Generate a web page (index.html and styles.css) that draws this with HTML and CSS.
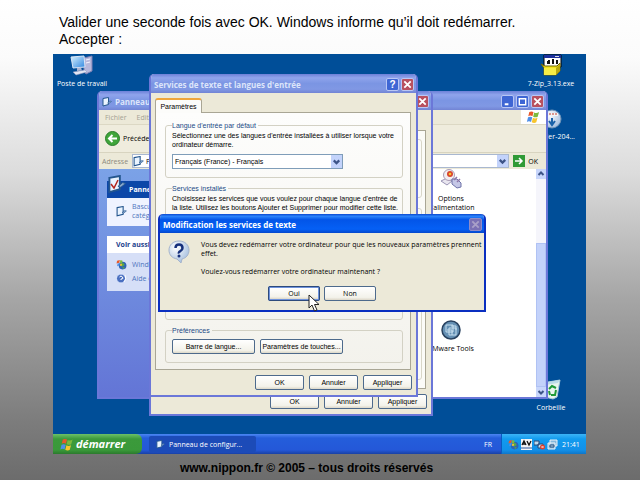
FILE: index.html
```html
<!DOCTYPE html>
<html lang="fr">
<head>
<meta charset="utf-8">
<title>Valider et redémarrer</title>
<link rel="stylesheet" href="styles.css">
</head>
<body>
<svg class="defs" aria-hidden="true">
  <defs>
    <linearGradient id="screenBlue" x1="0" y1="0" x2="1" y2="1"><stop offset="0" stop-color="#d8f2ff"/><stop offset="1" stop-color="#2f86e0"/></linearGradient>
    <radialGradient id="ball" cx=".35" cy=".3" r=".8"><stop offset="0" stop-color="#fff"/><stop offset="1" stop-color="#9db9dc"/></radialGradient>
    <symbol id="flag" viewBox="0 0 20 18">
      <path d="M4 2q3-2 6 0L8.500 8q-3-2-6 0z" fill="#e8592b"/>
      <path d="M11 2.500q3 2 7-.5L16 8.500q-3 2-6.500 0z" fill="#7cba3d"/>
      <path d="M2.200 9.500q3-2 6 0L6.500 16q-3-2-6 0z" fill="#4f8fe8"/>
      <path d="M9.200 10q3 2 6.500 0L14 16.500q-3 2-6.500 0z" fill="#f7c52d"/>
    </symbol>
    <symbol id="cross" viewBox="0 0 12 12"><path d="M2.500 2.500l7 7M9.500 2.500l-7 7" stroke="currentColor" stroke-width="2"/></symbol>
    <symbol id="down" viewBox="0 0 10 10"><path d="M2.500 4l2.500 2.500L7.500 4" fill="none" stroke="#3d5488" stroke-width="2"/></symbol>
    <symbol id="panel" viewBox="0 0 20 20">
      <path d="M2 3l11-2v14L2 18z" fill="#eaf4ff" stroke="#24568e" stroke-width="2"/>
      <path d="M11 12l5-4 3 1-5 4z" fill="#86a6cc" stroke="#24568e"/>
    </symbol>
    <symbol id="globe" viewBox="0 0 20 20">
      <circle cx="12" cy="12" r="7" fill="#2d63b5"/><path d="M8 9l5-2 3 4-5 3zM11 16l5-2-2 4z" fill="#5aa845"/>
      <path d="M2 3l5-1-1 5-5 1z" fill="#e8592b"/><path d="M8 2l4 1-1 5-4-1z" fill="#7cba3d"/><path d="M3 8l4-.5L6 12l-4 1z" fill="#4f8fe8"/><path d="M8 8l3 1-1 4-3-1z" fill="#f7c52d"/>
    </symbol>
  </defs>
</svg>

<main class="slide">
  <p class="lead">Valider une seconde fois avec OK. Windows informe qu’il doit redémarrer.<br>Accepter :</p>

  <div class="screen">
    <div class="desktop">
      <div class="shortcut computer">
        <svg width="24" height="21" viewBox="0 0 24 21"><path d="M14 3l8-2v15l-6 3-2-3z" fill="#b7b8dc" stroke="#7d80b4"/><path d="M16 5l4-1M16 8l4-1" stroke="#f4f4ff"/><path d="M1 2l13-1 1 11-12 1z" fill="url(#screenBlue)" stroke="#dbe6f7"/><path d="M7 13l4-.5 1 3-5 .5z" fill="#aeb6d4"/><path d="M3 17l12-2 2 2-11 3z" fill="#e4e6f3" stroke="#8f94bd" stroke-width=".5"/></svg>
        <span>Poste de travail</span>
      </div>
      <div class="shortcut zip">
        <svg width="22" height="22" viewBox="0 0 22 22"><path d="M4 1h17v12H4z" fill="#fff" stroke="#000"/><path d="M4 1h17v3H4z" fill="#1c2f9c"/><path d="M15 2h4v1h-4z" fill="#ddd"/><path d="M7 7h2v3H7zM12 6h2v4h-2zM16 7h2v3h-2z" fill="#111"/><path d="M1 10l4 2h12l3-3v8l-4 4H4V14z" fill="#f1e21d" stroke="#6d6506"/><path d="M8 6h2v4H8zM12 5h2v4h-2zM16 6h2v3h-2z" fill="#111"/><path d="M4 14h12v7H4z" fill="#f5ec45"/><path d="M16 14l4-4v7l-4 4z" fill="#b9a911"/></svg>
        <span>7-Zip_3.13.exe</span>
      </div>
      <div class="shortcut disc">
        <svg width="20" height="20" viewBox="0 0 20 20"><circle cx="10" cy="10" r="9" fill="url(#ball)" stroke="#6e93b7"/><path d="M3 4h13v3H3z" fill="#f4f4f4"/><path d="M4 5h11" stroke="#c0392b" stroke-dasharray="2 1"/><path d="M10 9v6M7 12l3 4 3-4" fill="none" stroke="#1b62a8" stroke-width="2"/></svg>
        <span>installer-204...</span>
      </div>
      <div class="shortcut bin">
        <svg width="20" height="21" viewBox="0 0 20 21"><path d="M1 4l18-3-3 17-4 2-8-2z" fill="#e9f5ee" stroke="#a9c9d8"/><path d="M1 4l18-3-2 3-13 2z" fill="#bcdbe8"/><path d="M8 10l3-3 4 2M15 11l-1 5h-4M8 12l1 4" fill="none" stroke="#1f9a37" stroke-width="2"/></svg>
        <span>Corbeille</span>
      </div>

      <section class="window explorer">
        <header class="caption">
          <svg width="10" height="10"><use href="#panel"/></svg>
          <h2>Panneau</h2>
          <div class="tools">
            <button class="cap" aria-label="Réduire"><svg viewBox="0 0 12 12"><path d="M3 9h4" stroke="#fff" stroke-width="2"/></svg></button>
            <button class="cap" aria-label="Agrandir"><svg viewBox="0 0 12 12"><path d="M2.500 3h7v6.500h-7zM2 3h8" fill="none" stroke="#fff" stroke-width="1.500"/></svg></button>
            <button class="cap close" aria-label="Fermer"><svg><use href="#cross"/></svg></button>
          </div>
        </header>
        <nav class="menu"><span>Fichier</span><span>Edit</span><svg class="brand" viewBox="-4 -1 28 20"><use href="#flag" width="20" height="18"/></svg></nav>
        <div class="toolbar">
          <svg width="15" height="15" viewBox="0 0 15 15"><circle cx="7.500" cy="7.500" r="7" fill="#3fa53a" stroke="#2a7d2c"/><path d="M12 7.500H4M7.500 4L4 7.500 7.500 11" fill="none" stroke="#fff" stroke-width="2"/></svg>
          <span>Précéden</span>
        </div>
        <div class="address">
          <label for="addr">Adresse</label>
          <div class="addr-box"><svg width="11" height="11"><use href="#panel"/></svg><input id="addr" value="Pa"><svg class="arrow"><use href="#down"/></svg></div>
          <button class="go"><svg width="12" height="12" viewBox="0 0 12 12"><path d="M0 0h12v12H0z" fill="#2f9a36"/><path d="M2 6h7M6 3l3 3-3 3" fill="none" stroke="#fff" stroke-width="1.500"/></svg>OK</button>
        </div>
        <div class="view">
          <aside class="side">
            <div class="card primary">
              <svg class="big" width="20" height="19" viewBox="0 0 20 19"><use href="#panel" width="20" height="19"/><path d="M4 9l3 4 4-8" fill="none" stroke="#b3261e" stroke-width="1.500"/></svg>
              <h3>Panne</h3>
              <a href="#"><svg width="11" height="11"><use href="#panel"/></svg><span>Bascu<br>catég</span></a>
            </div>
            <div class="card">
              <h3>Voir aussi</h3>
              <a href="#"><svg width="11" height="11"><use href="#globe"/></svg><span>Windo</span></a>
              <a href="#"><svg width="11" height="11" viewBox="0 0 11 11"><circle cx="5" cy="5.500" r="4.500" fill="#4a6fc0" stroke="#dfe9ff"/><path d="M3.500 4q1.500-2 3 0t-1.500 2v1M9 2q2 4-1 7" fill="none" stroke="#fff"/></svg><span>Aide e</span></a>
            </div>
          </aside>
          <div class="items">
            <div class="item"><svg width="22" height="21" viewBox="0 0 22 21"><path d="M1 12l6-3 5 3-5 4z" fill="#e9e6f0" stroke="#9a95b5"/><circle cx="9" cy="6" r="5.500" fill="#f2edf2" stroke="#a99cb4"/><circle cx="10" cy="5" r="3" fill="#d6452e"/><circle cx="10" cy="5" r="1.300" fill="#f7c52d"/><path d="M12 10l5 0 4 4v4l-4 1-5-4z" fill="#c5c7e6" stroke="#6e72a8"/><path d="M14 11l3-3M17 13l3-3" stroke="#8e76a8" stroke-width="1.500"/></svg><span>Options<br>d'alimentation</span></div>
            <div class="item tools-item"><svg width="20" height="20" viewBox="0 0 20 20"><circle cx="10" cy="10" r="9" fill="#6590b4" stroke="#28415f" stroke-width="1.500"/><path d="M5 5h7v7H5zM8 8h7v7H8zM6 10h5v5M10 6h5v4" fill="none" stroke="#c9e0f0"/></svg><span>VMware Tools</span></div>
          </div>
          <div class="scroll">
            <svg viewBox="0 0 10 10"><path d="M2.500 6L5 3.500 7.500 6" fill="none" stroke="#3d5488" stroke-width="2"/></svg>
            <i class="thumb"></i>
            <svg><use href="#down"/></svg>
          </div>
        </div>
      </section>

      <section class="window regional">
        <header class="caption"><div class="tools"><button class="cap close" aria-label="Fermer"><svg><use href="#cross"/></svg></button></div></header>
        <div class="sheet"><i></i><i></i></div>
        <footer class="actions"><button>OK</button><button>Annuler</button><button>Appliquer</button></footer>
      </section>

      <section class="window services">
        <header class="caption">
          <h2>Services de texte et langues d'entrée</h2>
          <div class="tools">
            <button class="cap" aria-label="Aide">?</button>
            <button class="cap close" aria-label="Fermer"><svg><use href="#cross"/></svg></button>
          </div>
        </header>
        <div class="body">
          <button class="tab">Paramètres</button>
          <div class="pane">
            <fieldset>
              <legend><label for="lang">Langue d'entrée par défaut</label></legend>
              <p>Sélectionnez une des langues d'entrée installées à utiliser lorsque votre<br>ordinateur démarre.</p>
              <div class="combo">
                <select id="lang"><option>Français (France) - Français</option></select>
                <svg class="arrow"><use href="#down"/></svg>
              </div>
            </fieldset>
            <fieldset class="installed">
              <legend>Services installés</legend>
              <p>Choisissez les services que vous voulez pour chaque langue d'entrée de<br>la liste. Utilisez les boutons Ajouter et Supprimer pour modifier cette liste.</p>
            </fieldset>
            <fieldset class="prefs">
              <legend>Préférences</legend>
              <div class="pair"><button>Barre de langue...</button><button>Paramètres de touches...</button></div>
            </fieldset>
          </div>
        </div>
        <footer class="actions"><button>OK</button><button>Annuler</button><button>Appliquer</button></footer>
      </section>

      <section class="window prompt" role="dialog" aria-labelledby="prompt-title">
        <header class="caption">
          <h2 id="prompt-title">Modification les services de texte</h2>
          <div class="tools"><button class="cap close" aria-label="Fermer" disabled><svg><use href="#cross"/></svg></button></div>
        </header>
        <div class="message">
          <svg width="22" height="24" viewBox="0 0 22 24"><path d="M11 1c6 0 10 4 10 9s-3 8-7 9l-1 4-4-4C4 18 1 15 1 10s4-9 10-9z" fill="url(#ball)" stroke="#a5b4cc"/><path d="M7.500 8q0-3.500 3.500-3.500T14.500 8q0 2-2 3t-1.500 2.500" fill="none" stroke="#16307c" stroke-width="2.500"/><circle cx="11" cy="16" r="1.500" fill="#16307c"/></svg>
          <p>Vous devez redémarrer votre ordinateur pour que les nouveaux paramètres prennent<br>effet.<br><br>Voulez-vous redémarrer votre ordinateur maintenant ?</p>
        </div>
        <div class="choice"><button class="default">Oui</button><button>Non</button></div>
      </section>

      <svg class="cursor" width="12" height="19" viewBox="0 0 12 19"><path d="M1 1v13l3-3 2.500 6 2.500-1-2.500-5.500H11z" fill="#fff" stroke="#222"/></svg>
    </div>

    <div class="taskbar">
      <button class="start"><svg width="14" height="13"><use href="#flag"/></svg>démarrer</button>
      <button class="task"><svg width="9" height="9"><use href="#panel"/></svg>Panneau de configur...</button>
      <span class="locale">FR</span>
      <div class="tray">
        <svg width="11" height="11"><use href="#globe"/></svg>
        <svg width="11" height="11" viewBox="0 0 11 11"><path d="M0 0h11v11H0z" fill="#f2f4f6"/><path d="M1 6l2-4 2 4M2 5h2M6 2l2 4 2-4" fill="none" stroke="#111" stroke-width="1.300"/><path d="M0 9h11" stroke="#8fa5c8" stroke-width="2"/></svg>
        <svg width="11" height="11" viewBox="0 0 11 11"><path d="M0 2h5v4H0zM4 5h5v4H4z" fill="#bcd9ee" stroke="#294a78"/><circle cx="8.500" cy="8" r="2.500" fill="#e0402c"/><path d="M7.500 7l2 2m0-2l-2 2" stroke="#fff" stroke-width=".7"/></svg>
        <svg width="11" height="11" viewBox="0 0 11 11"><path d="M3 1h7v6H3zM1 4h7v6H1z" fill="#86b9dc" stroke="#eef4f8"/><path d="M3 6h4v2H3z" fill="none" stroke="#28507c"/></svg>
        <time>21:41</time>
      </div>
    </div>
  </div>

  <p class="credit">www.nippon.fr © 2005 – tous droits réservés</p>
</main>
</body>
</html>
```
FILE: styles.css
```css
* { box-sizing: border-box; }

body {
  margin: 0;
  font-family: "Liberation Sans", Arial, sans-serif;
  color: #000;
}

h2, h3, p { margin: 0; }
svg { display: block; flex: none; }
.defs { position: absolute; width: 0; height: 0; }

.slide {
  min-height: 100vh;
  padding: 14px 54px 0 53px;
  background: linear-gradient(#fff 0%, #fbfbfb 12%, #dcdcdc 36%, #a6a6a6 62%, #7c7c7c 88%, #6c6c6c 100%);
}

.lead {
  padding: 0 0 6px 6px;
  font-size: 14px;
  line-height: 17px;
}

.credit {
  padding: 6px 26px 0 0;
  font-size: 12px;
  line-height: 16px;
  font-weight: bold;
  text-align: center;
}

.screen {
  font-family: "Open Sans", Tahoma, sans-serif;
  font-size: 7px;
  line-height: 9px;
}

.desktop {
  position: relative;
  height: 380px;
  overflow: hidden;
  background: #004e98;
}

/* Desktop shortcuts */
.shortcut {
  position: absolute;
  display: flex;
  flex-direction: column;
  align-items: center;
  gap: 3px;
  width: 60px;
  color: #fff;
  white-space: nowrap;
}
.computer { left: -1px; top: 1px; }
.zip { left: 468px; top: 0; }
.disc { left: 469px; top: 55px; }
.bin { left: 468px; top: 325px; }

/* Windows */
.window {
  position: absolute;
  display: flex;
  flex-direction: column;
  border: 2px solid #6b77d8;
  border-top: 0;
  border-radius: 5px 5px 0 0;
  background: #ece9d8;
  overflow: hidden;
}
.explorer { left: 44px; top: 37px; width: 451px; height: 308px; }
.regional { left: 96px; top: 37px; width: 284px; height: 325px; }
.services { left: 96px; top: 20px; width: 269px; height: 323px; }
.prompt { left: 105px; top: 160px; width: 328px; height: 98px; border-color: #0a2fc0; }

.caption {
  display: flex;
  align-items: center;
  gap: 3px;
  height: 19px;
  flex: none;
  padding: 2px 2px 0 3px;
  background: linear-gradient(#6c80d8, #8fa4ec 20%, #7b95e3 50%, #8098e4 80%, #7284d4);
  color: #dde5fa;
}
.prompt .caption {
  background: linear-gradient(#0a48d0, #2c84fb 12%, #0355e8 30%, #0560f5 80%, #0447cc);
  color: #fff;
}
.caption h2 {
  font: bold 8px/12px "Open Sans", sans-serif;
  white-space: nowrap;
}
.tools { display: flex; gap: 2px; margin-left: auto; }

button, select, input {
  margin: 0;
  padding: 0;
  font: inherit;
  color: #000;
}

.cap {
  width: 13px;
  height: 13px;
  border: 1px solid #b9c6f4;
  border-radius: 2px;
  background: #3f66d4;
  color: #fff;
  font: bold 10px/10px "Liberation Sans", sans-serif;
}
.cap svg { width: 11px; height: 11px; }
.close { background: #b8505f; }
.close:disabled { background: #7a70b4; border-color: #8f8cc8; color: #a9a0c8; }

/* Explorer */
.menu {
  display: flex;
  align-items: center;
  gap: 10px;
  height: 15px;
  padding-left: 6px;
  border-bottom: 1px solid #dcd8c4;
  color: #a5a294;
}
.brand { width: 25px; height: 14px; margin-left: auto; background: #fff; }
.toolbar {
  display: flex;
  align-items: center;
  gap: 3px;
  height: 27px;
  padding-left: 6px;
  background: #efecdd;
}
.address {
  display: flex;
  align-items: center;
  gap: 4px;
  height: 17px;
  padding: 0 8px 0 3px;
  border-top: 1px solid #d8d4c0;
  color: #8d8a7d;
}
.addr-box {
  display: flex;
  align-items: center;
  gap: 2px;
  flex: 1;
  height: 14px;
  background: #fff;
  border: 1px solid #a9b8d0;
}
.addr-box input { flex: 1; min-width: 0; height: 12px; border: 0; background: none; }
.arrow { width: 11px; height: 12px; background: #c3d3fb; }
.go { display: flex; align-items: center; gap: 3px; border: 0; background: none; }
.view { display: flex; flex: 1; background: #fff; }
.side {
  display: flex;
  flex-direction: column;
  gap: 10px;
  width: 60px;
  padding: 12px 0 0 8px;
  background: linear-gradient(#7ba2e7, #6375d6);
}
.card { position: relative; padding-bottom: 6px; background: #d6dff7; }
.card h3 {
  height: 17px;
  margin-bottom: 4px;
  padding-left: 9px;
  background: #fff;
  color: #1c3f8c;
  font-size: 7px;
  line-height: 17px;
}
.card a {
  display: flex;
  align-items: center;
  gap: 5px;
  min-height: 14px;
  padding-left: 9px;
  color: #4d74bd;
  text-decoration: none;
}
.primary { background: #eff3ff; }
.primary h3 { padding-left: 22px; background: #0c47a8; color: #fff; }
.big { position: absolute; left: 0; top: -6px; }
.items {
  display: flex;
  flex-direction: column;
  flex: 1;
  padding-right: 53px;
}
.item {
  display: flex;
  flex-direction: column;
  align-items: center;
  align-self: flex-end;
  gap: 4px;
  width: 64px;
  text-align: center;
}
.tools-item { margin-top: 108px; }
.scroll {
  display: flex;
  flex-direction: column;
  justify-content: space-between;
  width: 10px;
  background: #f5f5fb;
}
.scroll svg { width: 10px; height: 10px; background: #c8d6fb; }
.thumb { flex: 1; margin-top: 64px; background: #c3d2fa; border: 1px solid #b0c2f4; }

/* Dialogs */
.actions {
  display: flex;
  justify-content: flex-end;
  gap: 5px;
  padding: 5px 4px;
}
.actions button, .pair button, .choice button {
  height: 15px;
  border: 1px solid #4d6a8c;
  border-radius: 2px;
  background: linear-gradient(#fff, #f3f2ea 80%, #dcd7c8);
}
.actions button { width: 49px; }
.regional, .services { font-family: "Liberation Sans", sans-serif; }
.sheet {
  display: flex;
  flex-direction: column;
  gap: 10px;
  flex: 1;
  margin: 20px 5px 0;
  padding: 8px 3px;
  border: 1px solid #a9a695;
  background: #fbfbf8;
}
.sheet i { flex: 1; border: 1px solid #d8d6c8; border-radius: 3px; }
.sheet i + i { flex: 3; }

.body { display: flex; flex-direction: column; flex: 1; padding: 5px 5px 0 4px; }
.tab {
  align-self: flex-start;
  position: relative;
  width: 47px;
  height: 15px;
  border: 1px solid #a9a695;
  border-top: 2px solid #f0a63c;
  border-bottom: 0;
  border-radius: 3px 3px 0 0;
  background: #fcfcfa;
}
.pane {
  flex: 1;
  margin-top: -1px;
  padding: 8px 7px 0 9px;
  border: 1px solid #a9a695;
  background: linear-gradient(#fdfdfc, #f3f2ec);
}
fieldset {
  min-width: 0;
  height: 57px;
  margin: 0 0 6px;
  padding: 1px 6px 0;
  border: 1px solid #d3d1c4;
  border-radius: 3px;
}
legend { padding: 0 2px 0 0; color: #1b4a86; line-height: 9px; }
fieldset p { white-space: nowrap; }
.installed { height: 136px; }
.prefs { height: 37px; margin: 0; }
.combo {
  display: flex;
  width: 171px;
  height: 15px;
  margin-top: 5px;
  border: 1px solid #7f9db9;
  background: #fff;
}
.combo select {
  flex: 1;
  border: 0;
  padding-left: 2px;
  background: none;
  appearance: none;
}
.combo .arrow { height: 13px; }
.pair { display: flex; gap: 5px; padding-top: 3px; }
.pair button { width: 83px; white-space: nowrap; }

.message { display: flex; gap: 11px; padding: 7px 0 0 8px; white-space: nowrap; }
.choice { display: flex; justify-content: center; gap: 4px; padding-top: 10px; }
.choice button { width: 52px; }
.choice .default { border: 2px solid #6f93dc; outline: 1px solid #2d4a7c; outline-offset: -1px; }
.cursor { position: absolute; left: 255px; top: 240px; }

/* Taskbar */
.taskbar {
  display: flex;
  align-items: center;
  height: 20px;
  background: linear-gradient(#4b86f2, #245edb 20%, #2458d8 80%, #1941a5);
  color: #fff;
}
.start {
  display: flex;
  align-items: center;
  gap: 2px;
  width: 89px;
  height: 20px;
  padding-left: 7px;
  border: 0;
  border-radius: 0 6px 6px 0;
  background: linear-gradient(#6cc067, #3b9a3b 25%, #3a993a 80%, #2b7a2d);
  color: #fff;
  font: italic bold 11px/18px "Open Sans", sans-serif;
}
.task {
  display: flex;
  align-items: center;
  gap: 4px;
  width: 107px;
  height: 16px;
  margin-left: 7px;
  padding-left: 7px;
  border: 0;
  border-radius: 2px;
  background: #1c4bb8;
  color: #fff;
}
.locale { margin: 0 9px 0 auto; }
.tray {
  display: flex;
  align-items: center;
  gap: 2px;
  width: 85px;
  height: 20px;
  padding-left: 6px;
  background: linear-gradient(#3cb4f6, #119bee 25%, #1290e9 80%, #0f76c8);
  border-left: 1px solid #0a5bc2;
}
.tray time { margin-left: 2px; }
```
